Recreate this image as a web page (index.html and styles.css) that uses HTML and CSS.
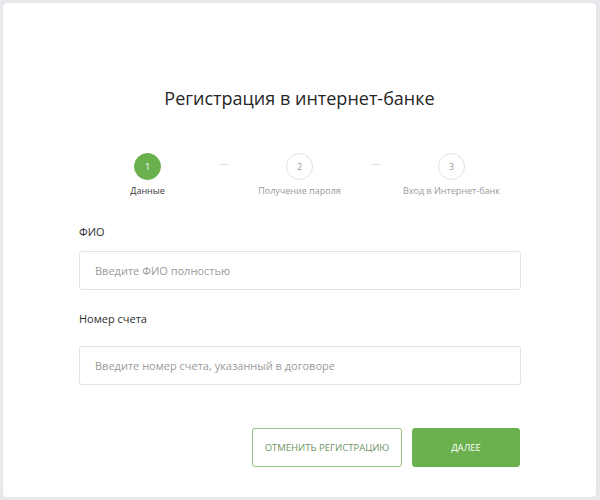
FILE: index.html
```html
<!DOCTYPE html>
<html lang="ru">
<head>
<meta charset="utf-8">
<title>Регистрация в интернет-банке</title>
<link rel="stylesheet" href="styles.css">
</head>
<body>
<div class="card">
  <h1 class="title">Регистрация в интернет-банке</h1>
  <div class="stepper">
    <div class="step step--active">
      <div class="step__circle">1</div>
      <div class="step__label">Данные</div>
    </div>
    <div class="step__connector"><span class="step__dash"></span></div>
    <div class="step">
      <div class="step__circle">2</div>
      <div class="step__label">Получение пароля</div>
    </div>
    <div class="step__connector"><span class="step__dash"></span></div>
    <div class="step">
      <div class="step__circle">3</div>
      <div class="step__label">Вход в Интернет-банк</div>
    </div>
  </div>
  <form class="form">
    <div class="field">
      <label class="field__label">ФИО</label>
      <input class="field__input" type="text" placeholder="Введите ФИО полностью">
    </div>
    <div class="field field--second">
      <label class="field__label field__label--wide">Номер счета</label>
      <input class="field__input" type="text" placeholder="Введите номер счета, указанный в договоре">
    </div>
    <div class="actions">
      <button type="button" class="btn btn--outline">Отменить регистрацию</button>
      <button type="button" class="btn btn--primary">Далее</button>
    </div>
  </form>
</div>
</body>
</html>
```
FILE: styles.css
```css
html, body {
  margin: 0;
  padding: 0;
}
body {
  background: #e8e9ec;
  font-family: "Open Sans", "Liberation Sans", sans-serif;
  padding: 3px 4px 3px 3px;
}
.card {
  background: #ffffff;
  border-radius: 4px;
  height: 494px;
  box-sizing: border-box;
  padding-top: 83px;
  box-shadow: 0 0 1px rgba(0,0,0,0.12);
}
.title {
  margin: 0;
  font-size: 18px;
  line-height: 24px;
  font-weight: 400;
  color: #262626;
  text-align: center;
}
.stepper {
  display: flex;
  justify-content: center;
  margin-top: 43px;
}
.step {
  width: 120px;
  display: flex;
  flex-direction: column;
  align-items: center;
}
.step__circle {
  width: 27px;
  height: 27px;
  box-sizing: border-box;
  border-radius: 50%;
  border: 1px solid #e2e2e2;
  background: #fff;
  color: #9a9a9a;
  font-size: 9px;
  display: flex;
  align-items: center;
  justify-content: center;
}
.step--active .step__circle {
  background: #6ab04c;
  border-color: #6ab04c;
  color: #ffffff;
}
.step__label {
  margin-top: 5px;
  font-size: 9px;
  line-height: 12px;
  color: #9a9a9a;
  white-space: nowrap;
}
.step--active .step__label {
  color: #3a3a3a;
}
.step__connector {
  width: 32px;
  display: flex;
  justify-content: center;
  padding-top: 11px;
  box-sizing: border-box;
}
.step__dash {
  display: block;
  width: 10px;
  height: 1px;
  background: #e0e0e0;
}
.form {
  margin: 27px 75px 0 76px;
}
.field__label {
  display: block;
  font-size: 11px;
  line-height: 15px;
  color: #2e2e2e;
  margin-bottom: 12px;
}
.field--second {
  margin-top: 21px;
}
.field__label--wide {
  margin-bottom: 20px;
}
.field__input {
  display: block;
  width: 100%;
  height: 39px;
  box-sizing: border-box;
  border: 1px solid #e3e3e3;
  border-radius: 3px;
  padding: 0 15px;
  font-family: "Open Sans", "Liberation Sans", sans-serif;
  font-size: 11px;
  color: #333;
  outline: none;
}
.field__input::placeholder {
  color: #9b9b9b;
}
.actions {
  display: flex;
  justify-content: flex-end;
  gap: 10px;
  margin-top: 43px;
  margin-right: 1px;
}
.btn {
  height: 39px;
  box-sizing: border-box;
  border-radius: 3px;
  font-family: "Open Sans", "Liberation Sans", sans-serif;
  font-size: 9.5px;
  text-transform: uppercase;
  padding: 0;
  cursor: pointer;
}
.btn--outline {
  width: 150px;
  background: #fff;
  border: 1px solid #94c482;
  color: #6f9562;
}
.btn--primary {
  width: 108px;
  background: #6ab04c;
  border: 1px solid #6ab04c;
  color: #ffffff;
}
```
